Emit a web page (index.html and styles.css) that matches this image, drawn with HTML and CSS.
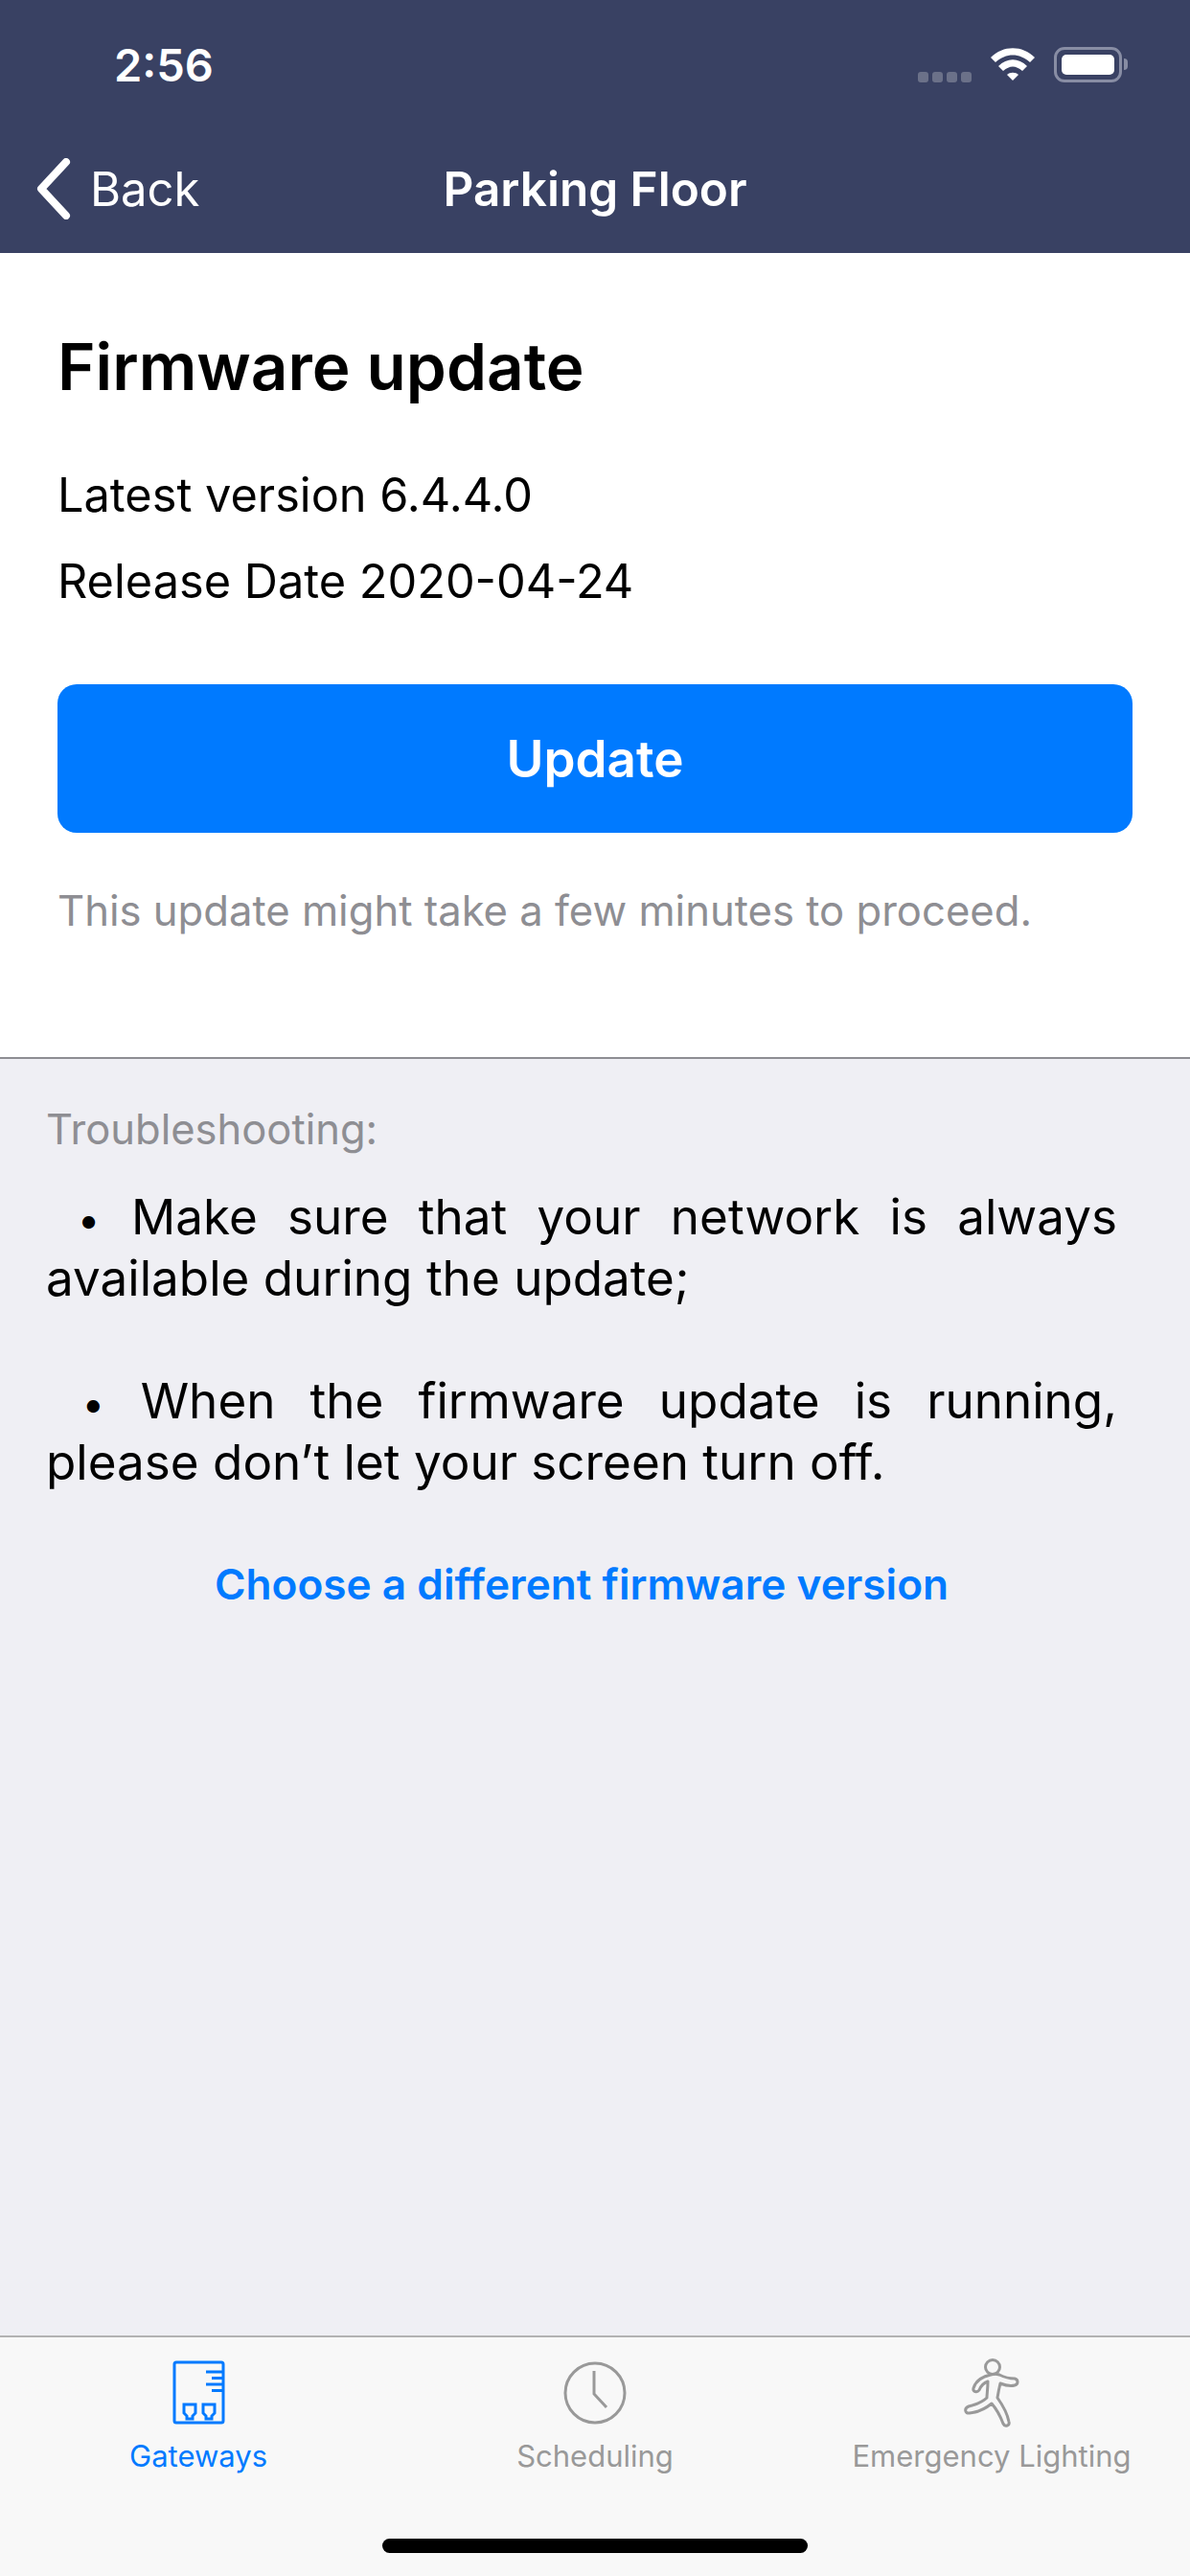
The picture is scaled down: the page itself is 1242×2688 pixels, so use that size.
FILE: index.html
```html
<!DOCTYPE html>
<html lang="en">
<head>
    <meta charset="UTF-8">
    <meta name="viewport" content="width=device-width, initial-scale=1.0">
    <title>Firmware update</title>
    <link rel="stylesheet" href="styles.css">
</head>
<body>
    <header class="top">
        <div class="status">
            <span class="time">2:56</span>
            <div class="status-icons">
                <div class="signal"><i></i><i></i><i></i><i></i></div>
                <svg class="wifi" width="48" height="36" viewBox="0 0 48 36">
                    <path d="M1 11 C14 -2 34 -2 47 11 L42 16 C31 6 17 6 6 16 Z" fill="#fff"/>
                    <path d="M9 20 C18 11 30 11 39 20 L34 25 C27 19 21 19 14 25 Z" fill="#fff"/>
                    <path d="M18 29 C21 26 27 26 30 29 L24 35 Z" fill="#fff"/>
                </svg>
                <div class="battery"><div class="battery-level"></div></div>
                <div class="battery-cap"></div>
            </div>
        </div>
        <nav class="navbar">
            <a class="back">
                <svg width="38" height="64" viewBox="0 0 38 64"><path d="M33 4 L7 32 L33 60" fill="none" stroke="#fff" stroke-width="8" stroke-linecap="round" stroke-linejoin="round"/></svg>
                <span>Back</span>
            </a>
            <div class="nav-title">Parking Floor</div>
        </nav>
    </header>

    <section class="update-panel">
        <h1>Firmware update</h1>
        <p class="info">Latest version 6.4.4.0</p>
        <p class="info">Release Date 2020-04-24</p>
        <button class="update-btn">Update</button>
        <p class="note">This update might take a few minutes to proceed.</p>
    </section>

    <main class="help">
        <div class="help-title">Troubleshooting:</div>
        <p class="help-item">Make sure that your network is always available during the update;</p>
        <p class="help-item">When the firmware update is running, please don’t let your screen turn off.</p>
        <a class="help-link">Choose a different firmware version</a>
    </main>

    <footer class="tabbar">
        <div class="tabs">
            <div class="tab active">
                <svg width="56" height="68" viewBox="0 0 56 68" fill="none" stroke="#007aff" stroke-width="3">
                    <rect x="3" y="2" width="51" height="63" rx="2"/>
                    <path d="M36 12H54M42 18.500H54M36 25H54M42 31.500H54"/>
                    <path d="M13 46H25V55L22 58V61H16V58L13 55Z"/>
                    <path d="M33 46H45V55L42 58V61H36V58L33 55Z"/>
                </svg>
                <span>Gateways</span>
            </div>
            <div class="tab">
                <svg width="68" height="68" viewBox="0 0 68 68" fill="none" stroke="#999" stroke-width="3">
                    <circle cx="34" cy="34" r="31"/>
                    <path d="M33 11V35L46 49"/>
                </svg>
                <span>Scheduling</span>
            </div>
            <div class="tab">
                <svg width="60" height="72" viewBox="0 0 60 72" fill="none" stroke="#999" stroke-width="3" stroke-linejoin="round">
                    <circle cx="31" cy="9" r="7.500"/>
                    <path d="M29 17 C20 19 13 24 11 31 C10 35 15 36 17 33 C19 28 23 25 26 24 C26 31 25 37 25 41 C20 46 14 48 6 50 C1 52 2 58 7 57 C16 56 24 52 30 47 C36 54 39 60 42 68 C44 72 49 70 48 66 C46 56 41 48 36 41 C37 35 38 30 39 26 C44 28 50 29 54 28 C58 27 58 22 54 21 C48 21 42 19 38 17 C35 16 32 16 29 17 Z"/>
                </svg>
                <span>Emergency Lighting</span>
            </div>
        </div>
        <div class="home-bar"></div>
    </footer>
</body>
</html>
```

FILE: styles.css
```css
* {
    box-sizing: border-box;
}
html, body {
    height: 100%;
}
body {
    margin: 0;
    display: flex;
    flex-direction: column;
    min-height: 2688px;
    font-family: Inter, "Liberation Sans", sans-serif;
    background-color: #efeff4;
    color: #000;
}
p {
    margin: 0;
}
.top {
    height: 264px;
    background-color: #394163;
    color: #fff;
}
.status {
    height: 134px;
    padding: 0 65px 0 119px;
    display: flex;
    justify-content: space-between;
    align-items: center;
}
.time {
    font-size: 47px;
    font-weight: 600;
}
.status-icons {
    display: flex;
    align-items: center;
}
.signal {
    display: flex;
    gap: 4px;
    margin: 26px 19px 0 0;
}
.signal i {
    width: 11px;
    height: 11px;
    border-radius: 3px;
    background-color: #6b7189;
}
.wifi {
    margin-right: 19px;
}
.battery {
    width: 71px;
    height: 37px;
    padding: 5px;
    border: 3px solid #888da4;
    border-radius: 11px;
}
.battery-level {
    height: 100%;
    background-color: #fff;
    border-radius: 5px;
}
.battery-cap {
    width: 4px;
    height: 12px;
    margin-left: 2px;
    background-color: #888da4;
    border-radius: 0 6px 6px 0;
}
.navbar {
    height: 130px;
    padding: 0 36px 4px 36px;
    display: grid;
    grid-template-columns: 1fr auto 1fr;
    align-items: center;
}
.back {
    display: flex;
    align-items: center;
    gap: 20px;
    font-size: 49px;
}
.nav-title {
    font-size: 49.500px;
    font-weight: 600;
}
.update-panel {
    height: 841px;
    padding: 79px 60px 0;
    background-color: #fff;
    border-bottom: 2px solid #8e8e93;
}
.update-panel h1 {
    margin: 0 0 49px;
    font-size: 67.400px;
    font-weight: 600;
    line-height: 80px;
}
.info {
    font-size: 48.700px;
    line-height: 90px;
}
.update-btn {
    display: block;
    width: 100%;
    height: 155px;
    margin-top: 62px;
    border: none;
    border-radius: 20px;
    background-color: #007aff;
    color: #fff;
    font-family: inherit;
    font-size: 53px;
    font-weight: 600;
}
.note {
    margin-top: 54px;
    font-size: 43.600px;
    line-height: 56px;
    color: #8e8e93;
}
.help {
    flex: 1;
    padding: 45px 76px 0 48px;
}
.help-title {
    font-size: 43.500px;
    line-height: 56px;
    color: #8e8e93;
    margin-bottom: 31px;
}
.help-item {
    font-size: 51.200px;
    line-height: 64px;
    text-align: justify;
    margin-bottom: 64px;
}
.help-item::before {
    content: "\00a0•\00a0";
    font-size: 42px;
    line-height: 0;
    word-spacing: 4px;
}
.help-link {
    display: block;
    margin-top: 4px;
    text-align: center;
    font-size: 44.200px;
    line-height: 64px;
    font-weight: 600;
    color: #007aff;
}
.tabbar {
    height: 251px;
    background-color: #f8f8f8;
    border-top: 2px solid #b2b2b2;
    display: flex;
    flex-direction: column;
    align-items: center;
}
.tabs {
    width: 100%;
    display: grid;
    grid-template-columns: repeat(3, 1fr);
    padding-top: 22px;
}
.tab {
    display: flex;
    flex-direction: column;
    align-items: center;
    gap: 10px;
    font-size: 31px;
    line-height: 40px;
    color: #999;
}
.tab svg {
    height: 72px;
}
.tab.active {
    color: #007aff;
}
.home-bar {
    width: 444px;
    height: 15px;
    margin-top: 66px;
    border-radius: 8px;
    background-color: #000;
}
```
